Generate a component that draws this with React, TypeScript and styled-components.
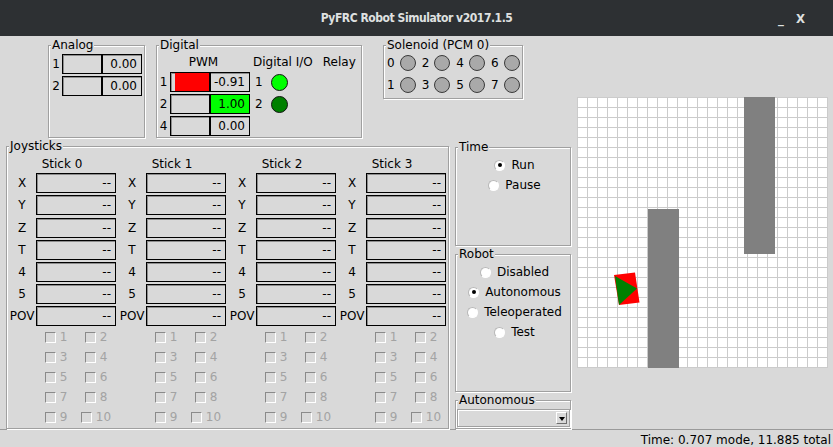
import React from 'react';
import styled, { createGlobalStyle } from 'styled-components';

const Global = createGlobalStyle`
  html, body { margin: 0; padding: 0; }
  body {
    background: #d9d9d9;
    font-family: "DejaVu Sans", sans-serif;
    font-size: 12px;
    color: #000;
  }
  * { box-sizing: border-box; }
`;

const Window = styled.div`
  width: 833px;
  height: 447px;
  display: flex;
  flex-direction: column;
  background: #d9d9d9;
  overflow: hidden;
`;

const TitleBar = styled.div`
  flex: none;
  height: 36px;
  background: #2d3033;
  color: #dfe0e0;
  display: grid;
  grid-template-columns: 1fr auto 1fr;
  align-items: center;
  font-family: "DejaVu Sans Condensed", "DejaVu Sans", sans-serif;
  font-weight: bold;
  font-size: 12px;
`;

const TitleText = styled.div`
  grid-column: 2;
  letter-spacing: -0.45px;
`;

const WinControls = styled.div`
  grid-column: 3;
  justify-self: end;
  display: flex;
  gap: 12px;
  padding-right: 28px;
  font-size: 13px;
`;

const Main = styled.div`
  flex: 1;
  display: flex;
  min-height: 0;
`;

const LeftArea = styled.div`
  width: 575px;
  display: flex;
  flex-direction: column;
`;

const TopRow = styled.div`
  display: flex;
  align-items: flex-start;
  padding: 9px 0 0 48px;
  gap: 11px;
`;

const BottomRow = styled.div`
  flex: 1;
  display: flex;
  gap: 6px;
  padding-left: 6px;
  margin-top: 8px;
`;

const Frame = styled.div<{ $w?: number; $h?: number; $ml?: number; $mt?: number; $pt?: number }>`
  position: relative;
  flex: none;
  width: ${(p) => (p.$w ? `${p.$w}px` : 'auto')};
  height: ${(p) => (p.$h ? `${p.$h}px` : 'auto')};
  margin-left: ${(p) => p.$ml ?? 0}px;
  margin-top: ${(p) => p.$mt ?? 0}px;
  padding-top: ${(p) => p.$pt ?? 0}px;
  border: 1px solid #a0a0a0;
  box-shadow: inset 1px 1px 0 #ffffff, 1px 1px 0 #ffffff;
`;

const FrameLabel = styled.div`
  position: absolute;
  top: -8px;
  left: 2px;
  padding: 0 1px;
  line-height: 14px;
  background: #d9d9d9;
  white-space: nowrap;
`;

/* ---------- value boxes ---------- */

const VBox = styled.div<{ $w: number }>`
  position: relative;
  width: ${(p) => p.$w}px;
  height: 20px;
  border: 1px solid #000;
  box-shadow: inset 1px 1px 0 rgba(0, 0, 0, 0.35);
  text-align: right;
  padding-right: 4px;
  line-height: 18px;
  overflow: hidden;
`;

const VFill = styled.div<{ $color: string }>`
  position: absolute;
  top: 0;
  bottom: 0;
  background: ${(p) => p.$color};
`;

const VCenter = styled.div`
  position: absolute;
  top: 0;
  bottom: 0;
  left: 38px;
  width: 2px;
  background: #000;
`;

const VText = styled.span`
  position: relative;
`;

function ValueBox({ value, text, center }: { value?: number; text: string; center?: boolean }) {
  const half = 39;
  let fill: React.ReactNode = null;
  if (value !== undefined && value !== 0) {
    const w = Math.abs(value) * half;
    const left = value < 0 ? half - w : half;
    fill = <VFill $color={value < 0 ? '#ff0000' : '#00ff00'} style={{ left, width: w }} />;
  }
  return (
    <VBox $w={80}>
      {fill}
      {center && <VCenter />}
      <VText>{text}</VText>
    </VBox>
  );
}

/* ---------- analog ---------- */

const AnalogGrid = styled.div`
  display: grid;
  grid-template-columns: 12px 80px;
  row-gap: 2px;
  padding: 8px 0 0 1px;
  align-items: center;
`;

const RowLabel = styled.div`
  text-align: center;
  line-height: 20px;
`;

/* ---------- digital ---------- */

const DigitalBody = styled.div`
  display: flex;
  padding: 9px 0 0 0;
`;

const Group = styled.div<{ $ml?: number }>`
  display: flex;
  flex-direction: column;
  margin-left: ${(p) => p.$ml ?? 0}px;
`;

const GroupHeader = styled.div`
  line-height: 14px;
  height: 14px;
  text-align: center;
  margin-bottom: 3px;
  white-space: nowrap;
`;

const PwmGrid = styled.div`
  display: grid;
  grid-template-columns: 13px 80px;
  row-gap: 2px;
  align-items: center;
`;

const DioRow = styled.div`
  display: flex;
  align-items: center;
  height: 20px;
  gap: 8px;
  padding-left: 2px;
  margin-bottom: 2px;
`;

const Led = styled.div<{ $on: boolean }>`
  width: 17px;
  height: 17px;
  border-radius: 50%;
  border: 1px solid #141414;
  background: ${(p) => (p.$on ? '#00ff00' : '#008000')};
`;

/* ---------- solenoid ---------- */

const SolBody = styled.div`
  display: flex;
  flex-direction: column;
  gap: 2px;
  padding: 7px 3px 3px 3px;
`;

const SolRow = styled.div`
  display: flex;
  align-items: center;
  height: 20px;
  gap: 6px;
`;

const SolItem = styled.div`
  display: flex;
  align-items: center;
  gap: 5px;
`;

const SolLamp = styled.div`
  width: 16px;
  height: 16px;
  border-radius: 50%;
  border: 1px solid #3a3a3a;
  background: #a9a9a9;
`;

/* ---------- joysticks ---------- */

const SticksBody = styled.div`
  display: flex;
  gap: 2px;
  padding: 10px 0 0 1px;
`;

const StickCol = styled.div`
  display: flex;
  flex-direction: column;
  width: 108px;
`;

const StickHeader = styled.div`
  height: 14px;
  line-height: 14px;
  text-align: center;
  margin-bottom: 2.2px;
`;

const AxisGrid = styled.div`
  display: grid;
  grid-template-columns: 28px 80px;
  row-gap: 2.2px;
  align-items: center;
`;

const ButtonGrid = styled.div`
  display: grid;
  grid-template-columns: 40px 40px;
  grid-auto-rows: 20px;
  margin: 1px 0 0 28px;
`;

const CheckItem = styled.div`
  display: flex;
  align-items: center;
  justify-content: center;
  gap: 4px;
  color: #a3a3a3;
`;

const CheckBox = styled.div`
  width: 11px;
  height: 11px;
  border-style: solid;
  border-width: 1px;
  border-color: #8a8a8a #ffffff #ffffff #8a8a8a;
`;

/* ---------- control column ---------- */

const ControlCol = styled.div`
  width: 116px;
  display: flex;
  flex-direction: column;
  gap: 8px;
  margin-top: 1px;
`;

const RadioList = styled.div`
  display: flex;
  flex-direction: column;
  align-items: center;
  padding: 7px 0 0 3px;
`;

const RadioRow = styled.div`
  display: flex;
  align-items: center;
  height: 20px;
  gap: 6px;
`;

const RadioDot = styled.div<{ $checked: boolean }>`
  width: 11px;
  height: 11px;
  border-radius: 50%;
  background: #fff;
  border: 1px solid;
  border-color: #b8b8b8 #ffffff #ffffff #b8b8b8;
  display: flex;
  align-items: center;
  justify-content: center;
  &::after {
    content: '';
    display: ${(p) => (p.$checked ? 'block' : 'none')};
    width: 4px;
    height: 4px;
    border-radius: 50%;
    background: #000;
  }
`;

const Combo = styled.div`
  margin: 0 0 0 1px;
  height: 18px;
  width: 113px;
  border: 1px solid #a0a0a0;
  box-shadow: inset 1px 1px 0 #fff, 1px 1px 0 #fff;
  display: flex;
  justify-content: flex-end;
  padding: 2px;
`;

const ComboArrow = styled.div`
  width: 11px;
  height: 12px;
  border-style: solid;
  border-width: 1px;
  border-color: #ffffff #6e6e6e #6e6e6e #ffffff;
  display: flex;
  align-items: center;
  justify-content: center;
  &::after {
    content: '';
    border-left: 3.5px solid transparent;
    border-right: 3.5px solid transparent;
    border-top: 4px solid #000;
    margin-top: 1px;
  }
`;

/* ---------- field ---------- */

const FieldArea = styled.div`
  flex: 1;
  display: flex;
  align-items: center;
  padding-left: 2px;
`;

const StatusBar = styled.div`
  flex: none;
  height: 18px;
  border-top: 1px solid #9a9a9a;
  text-align: right;
  padding-right: 2px;
  line-height: 20px;
`;

function Field() {
  const W = 251;
  const H = 271;
  const v = Array.from({ length: 26 }, (_, i) => i * 10 + 0.5);
  const h = Array.from({ length: 28 }, (_, i) => i * 10 + 0.5);
  return (
    <svg width={W} height={H} viewBox={`0 0 ${W} ${H}`}>
      <rect width={W} height={H} fill="#ffffff" />
      {v.map((x) => (
        <line key={`v${x}`} x1={x} y1={0} x2={x} y2={H} stroke="#cbcbcb" strokeWidth={1} />
      ))}
      {h.map((y) => (
        <line key={`h${y}`} x1={0} y1={y} x2={W} y2={y} stroke="#cbcbcb" strokeWidth={1} />
      ))}
      <rect x={71} y={112} width={31} height={159} fill="#808080" />
      <rect x={167} y={0} width={31} height={157} fill="#808080" />
      <polygon points="37,178 58,175.5 62.5,205.5 42,208" fill="#ff0000" />
      <polygon points="38,179 60,191.5 42,208" fill="#008000" />
    </svg>
  );
}

const axes = ['X', 'Y', 'Z', 'T', '4', '5', 'POV'];
const buttons = [1, 2, 3, 4, 5, 6, 7, 8, 9, 10];

function Stick({ n }: { n: number }) {
  return (
    <StickCol>
      <StickHeader>Stick {n}</StickHeader>
      <AxisGrid>
        {axes.map((a) => (
          <React.Fragment key={a}>
            <RowLabel>{a}</RowLabel>
            <ValueBox text="--" />
          </React.Fragment>
        ))}
      </AxisGrid>
      <ButtonGrid>
        {buttons.map((b) => (
          <CheckItem key={b}>
            <CheckBox />
            <span>{b}</span>
          </CheckItem>
        ))}
      </ButtonGrid>
    </StickCol>
  );
}

function Radio({ label, checked }: { label: string; checked?: boolean }) {
  return (
    <RadioRow>
      <RadioDot $checked={!!checked} />
      <span>{label}</span>
    </RadioRow>
  );
}

export default function App() {
  return (
    <>
      <Global />
      <Window>
        <TitleBar>
          <TitleText>PyFRC Robot Simulator v2017.1.5</TitleText>
          <WinControls>
            <span>_</span>
            <span>X</span>
          </WinControls>
        </TitleBar>
        <Main>
          <LeftArea>
            <TopRow>
              <Frame $w={97} $h={93}>
                <FrameLabel>Analog</FrameLabel>
                <AnalogGrid>
                  <RowLabel>1</RowLabel>
                  <ValueBox text="0.00" center />
                  <RowLabel>2</RowLabel>
                  <ValueBox text="0.00" center />
                </AnalogGrid>
              </Frame>
              <Frame $w={206} $h={93}>
                <FrameLabel>Digital</FrameLabel>
                <DigitalBody>
                  <Group>
                    <GroupHeader>PWM</GroupHeader>
                    <PwmGrid>
                      <RowLabel>1</RowLabel>
                      <ValueBox text="-0.91" value={-0.91} center />
                      <RowLabel>2</RowLabel>
                      <ValueBox text="1.00" value={1} center />
                      <RowLabel>4</RowLabel>
                      <ValueBox text="0.00" center />
                    </PwmGrid>
                  </Group>
                  <Group $ml={3}>
                    <GroupHeader>Digital I/O</GroupHeader>
                    <DioRow>
                      <span>1</span>
                      <Led $on />
                    </DioRow>
                    <DioRow>
                      <span>2</span>
                      <Led $on={false} />
                    </DioRow>
                  </Group>
                  <Group $ml={10}>
                    <GroupHeader>Relay</GroupHeader>
                  </Group>
                </DigitalBody>
              </Frame>
              <Frame $w={140} $ml={10}>
                <FrameLabel>Solenoid (PCM 0)</FrameLabel>
                <SolBody>
                  {[
                    [0, 2, 4, 6],
                    [1, 3, 5, 7],
                  ].map((row, ri) => (
                    <SolRow key={ri}>
                      {row.map((s) => (
                        <SolItem key={s}>
                          <span>{s}</span>
                          <SolLamp />
                        </SolItem>
                      ))}
                    </SolRow>
                  ))}
                </SolBody>
              </Frame>
            </TopRow>
            <BottomRow>
              <Frame $w={443}>
                <FrameLabel>Joysticks</FrameLabel>
                <SticksBody>
                  {[0, 1, 2, 3].map((n) => (
                    <Stick key={n} n={n} />
                  ))}
                </SticksBody>
              </Frame>
              <ControlCol>
                <Frame $h={99}>
                  <FrameLabel>Time</FrameLabel>
                  <RadioList>
                    <Radio label="Run" checked />
                    <Radio label="Pause" />
                  </RadioList>
                </Frame>
                <Frame $h={138}>
                  <FrameLabel>Robot</FrameLabel>
                  <RadioList>
                    <Radio label="Disabled" />
                    <Radio label="Autonomous" checked />
                    <Radio label="Teleoperated" />
                    <Radio label="Test" />
                  </RadioList>
                </Frame>
                <Frame $h={29} $pt={8}>
                  <FrameLabel>Autonomous</FrameLabel>
                  <Combo>
                    <ComboArrow />
                  </Combo>
                </Frame>
              </ControlCol>
            </BottomRow>
          </LeftArea>
          <FieldArea>
            <Field />
          </FieldArea>
        </Main>
        <StatusBar>Time: 0.707 mode, 11.885 total</StatusBar>
      </Window>
    </>
  );
}
